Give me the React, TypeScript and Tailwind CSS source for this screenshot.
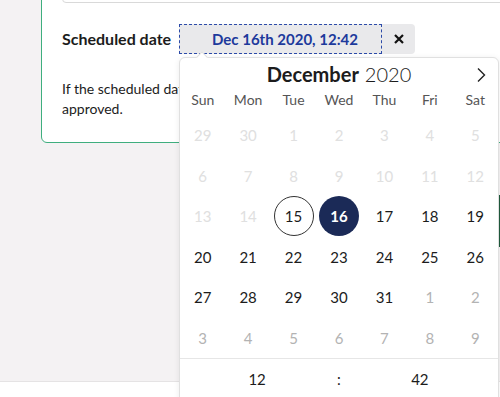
import { useMemo } from 'react'

const WEEKDAYS = ['Sun', 'Mon', 'Tue', 'Wed', 'Thu', 'Fri', 'Sat']

type Day = { n: number; kind: 'past' | 'active' | 'next' }

export default function App() {
  // Сетка дней декабря 2020
  const days = useMemo<Day[]>(() => {
    const list: Day[] = [
      { n: 29, kind: 'past' },
      { n: 30, kind: 'past' },
    ]
    for (let i = 1; i <= 31; i++) list.push({ n: i, kind: i < 15 ? 'past' : 'active' })
    for (let i = 1; i <= 9; i++) list.push({ n: i, kind: 'next' })
    return list
  }, [])

  return (
    <div className="relative w-[500px] h-[397px] overflow-hidden bg-white font-['Lato',sans-serif] text-[#1c1c1c]">
      {/* Основная область */}
      <div className="h-[382px] bg-[#f4f2f3] border-b border-[#e5e3e4] overflow-hidden">
        <div className="ml-[41px] mt-[-40px] w-[520px] bg-white border border-[#3fae7e] rounded-md px-5 pt-[12px] pb-[23px]">
          <div className="h-[30px] border border-[#d9d9d9] rounded" />

          <div className="mt-[21px] flex items-center h-[30px]">
            <span className="w-[117px] text-[16px] font-bold">Scheduled date</span>
            <div className="flex h-[30px] w-[236px] bg-[#e9e9eb] rounded-r">
              <div className="w-[203px] h-[30px] border border-dashed border-[#2b4aa8] flex items-center pl-[32px] text-[15px] font-bold text-[#1d3a9c]">
                Dec 16th 2020, 12:42
              </div>
              <div className="flex-1 flex items-center justify-center">
                <svg width="10" height="10" viewBox="0 0 10 10">
                  <path d="M1 1L9 9M9 1L1 9" stroke="#111" strokeWidth="2.2" />
                </svg>
              </div>
            </div>
          </div>

          <p className="mt-[25px] text-[14px] leading-5 whitespace-nowrap">
            If the scheduled date has passed, the post will be published once it is
            <br />
            approved.
          </p>
        </div>
        <div className="mt-[52px] ml-[499px] w-[40px] h-[52px] bg-[#1f5a3c]" />
      </div>

      {/* Календарь */}
      <div className="absolute left-[179px] top-[57px] w-[320px] h-[350px] bg-white border border-[#e0e0e0] rounded-md shadow-[0_1px_6px_rgba(0,0,0,0.08)]">
        <div className="absolute left-[18px] top-[-5px] w-2 h-2 rotate-45 bg-white border-l border-t border-[#e0e0e0]" />
        <div className="relative h-[32px] flex items-center justify-center text-[20px] leading-none">
          <span className="font-bold">December</span>
          <span className="ml-[6px] font-light">2020</span>
          <svg className="absolute right-[12px] top-[9px]" width="10" height="16" viewBox="0 0 10 16">
            <path d="M2 1.5L8.5 8L2 14.5" fill="none" stroke="#222" strokeWidth="1.4" />
          </svg>
        </div>
        <div className="grid grid-cols-7 h-[20px] items-center text-[14px] leading-none text-[#555]">
          {WEEKDAYS.map((w) => (
            <span key={w} className="text-center">{w}</span>
          ))}
        </div>
        <div className="mt-[5px] grid grid-cols-7">
          {days.map((d, i) => (
            <div key={i} className="h-[40.5px] flex items-center justify-center text-[15px]">
              <span
                className={
                  d.kind === 'active' && d.n === 16
                    ? 'w-[40px] h-[40px] rounded-full bg-[#1b2a57] text-white font-bold flex items-center justify-center'
                    : d.kind === 'active' && d.n === 15
                      ? 'w-[40px] h-[40px] rounded-full border border-[#333] flex items-center justify-center'
                      : d.kind === 'past'
                        ? 'text-[#e0e0e0]'
                        : d.kind === 'next'
                          ? 'text-[#b3b3b3]'
                          : ''
                }
              >
                {d.n}
              </span>
            </div>
          ))}
        </div>
        <div className="border-t border-[#e6e6e6] grid grid-cols-7 h-[42px] items-center text-[15px]">
          <span className="col-start-2 text-center relative left-[9px]">12</span>
          <span className="col-start-4 text-center">:</span>
          <span className="col-start-6 text-center relative left-[-10px]">42</span>
        </div>
      </div>
    </div>
  )
}
